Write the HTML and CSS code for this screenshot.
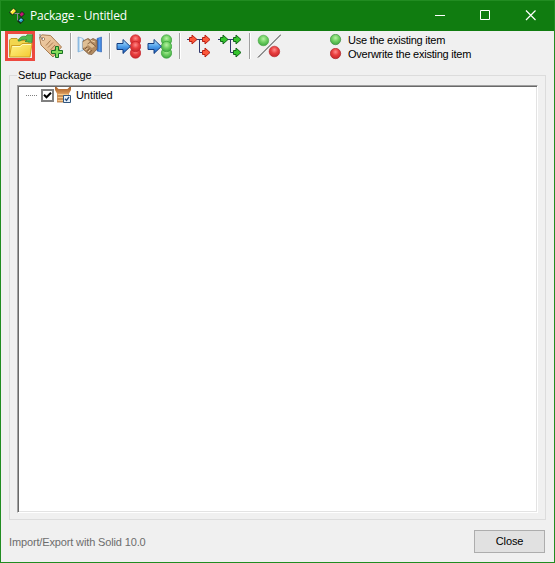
FILE: index.html
```
<!DOCTYPE html>
<html lang="en">
<head>
<meta charset="utf-8">
<title>Package - Untitled</title>
<link rel="stylesheet" href="styles.css">
</head>
<body>
<svg width="0" height="0" class="defs" aria-hidden="true">
  <defs>
    <radialGradient id="red" cx=".5" cy=".35" r=".65"><stop offset="0" stop-color="#ff8b8b"/><stop offset=".5" stop-color="#e83e3e"/><stop offset="1" stop-color="#c7262b"/></radialGradient>
    <radialGradient id="green" cx=".5" cy=".35" r=".65"><stop offset="0" stop-color="#b8f2a5"/><stop offset=".5" stop-color="#6fd062"/><stop offset="1" stop-color="#3fa642"/></radialGradient>
    <linearGradient id="blue" x2="0" y2="1"><stop stop-color="#c2ecff"/><stop offset=".5" stop-color="#4f9fea"/><stop offset="1" stop-color="#1659bd"/></linearGradient>
    <linearGradient id="folder" x2="1" y2="1"><stop stop-color="#fff58c"/><stop offset="1" stop-color="#f4c92f"/></linearGradient>
    <linearGradient id="tag" x2="1" y2="1"><stop stop-color="#f0cfaa"/><stop offset="1" stop-color="#dcae7d"/></linearGradient>
    <linearGradient id="sleeve"><stop stop-color="#2361bd"/><stop offset=".6" stop-color="#58a0f0"/><stop offset="1" stop-color="#2c6bc8"/></linearGradient>
    <linearGradient id="cuff"><stop stop-color="#7fb5e0"/><stop offset=".5" stop-color="#f4fbff"/><stop offset="1" stop-color="#a5cdec"/></linearGradient>
    <linearGradient id="box" x2="0" y2="1"><stop stop-color="#a55d27"/><stop offset="1" stop-color="#d89454"/></linearGradient>
    <path id="arrow" d="M2 -2H4.500V-4.500L9.500 0L4.500 4.500V2H2Z"/>
    <path id="bigarrow" d="M1 9.500H7V5.500L14.300 12.500L7 19.500V15.500H1Z"/>
  </defs>
</svg>
<div class="window">
  <header class="titlebar">
    <svg class="app-icon" width="16" height="16" viewBox="0 0 16 16">
      <path d="M5 5.500H11M8.500 5.500V12.500H11" fill="none" stroke="#8d8d8d"/>
      <path d="M0 4.500L4.500 0L8 3L3.500 7.500Z" fill="#222"/>
      <path d="M1 4L4.500 .5L7 3L3.500 6.500Z" fill="#ffec35"/><path d="M2 4L4.500 1.500" stroke="#fffbb0"/>
      <path d="M9.500 6.500L13 3L16 6L12.500 9.500Z" fill="#18251a"/><path d="M10.500 6.500L13 4L15 6L12.500 8.500Z" fill="#c0186f"/>
      <path d="M8 13L12 9L15.500 12L11.500 16Z" fill="#18251a"/><path d="M9.500 12.500L12 10L14.500 12L12 14.500Z" fill="#20a8c0"/><path d="M11 12.500L12.500 11" stroke="#b8ffff"/>
    </svg>
    <h1>Package - Untitled</h1>
    <div class="controls">
      <svg width="45" height="30" viewBox="0 0 45 30"><path d="M17 14.500H27" stroke="#fff"/></svg>
      <svg width="45" height="30" viewBox="0 0 45 30"><path d="M17.500 9.500H26.500V18.500H17.500Z" fill="none" stroke="#fff"/></svg>
      <svg width="45" height="30" viewBox="0 0 45 30"><path d="M18 9.500L27.500 19M27.500 9.500L18 19" stroke="#fff" stroke-width="1.2"/></svg>
    </div>
  </header>
  <div class="toolbar">
    <button class="tool selected"><svg width="25" height="25" viewBox="0 0 25 25">
      <path d="M1.500 22V6L3 4.500H9L11 6.500H21V11" fill="#f2d64e" stroke="#c59a25"/>
      <path d="M10 7C11.500 3 14.500 1.500 18 2.500L19 .8H24.500L24 8.500L17 7.500L19 5.700C16 5 13.500 5.500 12 7Z" fill="#4fbb4c" stroke="#268031" stroke-width=".7"/>
      <path d="M3.500 11.500H12L14 9.500H24L22 23H1.500Z" fill="url(#folder)" stroke="#d0a020"/>
      <path d="M4.500 12.500H12.500L14.500 10.500H23" fill="none" stroke="#fffbc0"/>
    </svg></button>
    <button class="tool"><svg width="25" height="25" viewBox="0 0 25 25">
      <path d="M1.500 3L4 .8L12.500 1.500L23.500 13L15 23L3 11Z" fill="url(#tag)" stroke="#a87d52"/>
      <path d="M8 11.500L12.500 6.500M10 13.500L15 8.500M12.500 16L17 11M14.500 18L19 13" stroke="#9e7147" stroke-width=".9"/>
      <circle cx="5.200" cy="5" r="1.500" fill="#fff" stroke="#9b6c42" stroke-width=".8"/><path d="M2 0C1.500 2 3 4.500 5 5" fill="none" stroke="#777"/>
      <path d="M17.500 12.500H20.500V16.500H24.500V19.500H20.500V23.500H17.500V19.500H13.500V16.500H17.500Z" fill="#83dc5b" stroke="#167324"/>
    </svg></button>
    <span class="sep"></span>
    <button class="tool"><svg width="25" height="25" viewBox="0 0 25 25">
      <path d="M1 3L5 4L6.500 5V16L1 18Z" fill="url(#cuff)" stroke="#7eb0d8" stroke-width=".7"/>
      <path d="M20 4.500L24.500 3V18L20 17Z" fill="url(#sleeve)" stroke="#2f65b6" stroke-width=".6"/>
      <path d="M6 7L11 4.500L13.500 6L16 4.500L20 6.500V15L15 20.500L11.500 20L6 15Z" fill="#b28c62" stroke="#7d5b3b" stroke-width=".8"/>
      <path d="M6 8L10.500 5.500L13 8L18 12L15 14L11 11L8.500 13L6 14Z" fill="#dfbf94"/>
      <path d="M10.500 10L13.500 8L19 12.500M8 15L10 13M10 17.500L12.500 14.500M12.500 19L15 16" fill="none" stroke="#735033" stroke-width=".8"/>
      <path d="M8.500 16L10.500 14M11 18L13 16M14 6.500L18 8" stroke="#f0d1a5"/>
    </svg></button>
    <span class="sep"></span>
    <button class="tool"><svg width="25" height="25" viewBox="0 0 25 25">
      <g fill="url(#red)" stroke="#c5242a" stroke-width=".7"><circle cx="19.500" cy="6" r="5.200"/><circle cx="19.500" cy="19" r="5.200"/><circle cx="19.500" cy="12.500" r="5.200"/></g>
      <use href="#bigarrow" fill="url(#blue)" stroke="#123d80"/>
    </svg></button>
    <button class="tool"><svg width="25" height="25" viewBox="0 0 25 25">
      <g fill="url(#green)" stroke="#38a43a" stroke-width=".7"><circle cx="19.500" cy="6" r="5.200"/><circle cx="19.500" cy="19" r="5.200"/><circle cx="19.500" cy="12.500" r="5.200"/></g>
      <use href="#bigarrow" fill="url(#blue)" stroke="#123d80"/>
    </svg></button>
    <span class="sep"></span>
    <button class="tool"><svg width="25" height="25" viewBox="0 0 25 25">
      <path d="M1 5.500H17M13.500 5.500V18.500H17" fill="none" stroke="#32386c"/>
      <g fill="#fc583a" stroke="#b81f12"><use href="#arrow" x="1.500" y="5.500"/><use href="#arrow" x="14.500" y="5.500"/><use href="#arrow" x="14.500" y="18.500"/></g>
    </svg></button>
    <button class="tool"><svg width="25" height="25" viewBox="0 0 25 25">
      <path d="M1 5.500H17M13.500 5.500V18.500H17" fill="none" stroke="#32386c"/>
      <g fill="#35c52d" stroke="#12651a"><use href="#arrow" x="1.500" y="5.500"/><use href="#arrow" x="14.500" y="5.500"/><use href="#arrow" x="14.500" y="18.500"/></g>
    </svg></button>
    <span class="sep"></span>
    <button class="tool"><svg width="25" height="25" viewBox="0 0 25 25">
      <path d="M2 23.500L25 .5" stroke="#333"/>
      <circle cx="7.400" cy="6.500" r="5.300" fill="url(#green)" stroke="#46a842" stroke-width=".6"/><circle cx="18.400" cy="17.500" r="5.300" fill="url(#red)" stroke="#b72226" stroke-width=".6"/>
    </svg></button>
    <div class="legend">
      <div><svg width="12" height="12"><circle cx="5.500" cy="5.500" r="5.200" fill="url(#green)" stroke="#46904a" stroke-width=".7"/></svg><span>Use the existing item</span></div>
      <div><svg width="12" height="12"><circle cx="5.500" cy="5.500" r="5.200" fill="url(#red)" stroke="#a92a2e" stroke-width=".7"/></svg><span>Overwrite the existing item</span></div>
    </div>
  </div>
  <fieldset class="group">
    <legend>Setup Package</legend>
    <div class="tree">
      <div class="node">
        <span class="dots"></span>
        <span class="check"><svg width="9" height="9" viewBox="0 0 9 9"><path d="M1 3.800L3.500 6.300L8 1.800" fill="none" stroke="#000" stroke-width="2"/></svg></span>
        <svg class="package" width="16" height="16" viewBox="0 0 16 16">
          <path d="M2 6H14V15H2Z" fill="#d9a066"/>
          <path d="M3 7.500H13M3 10.500H9M3 13.500H8" stroke="#f5c98d"/>
          <path d="M2 9H14M2 12H9M2 15H9" stroke="#b5783f" stroke-width=".8"/>
          <path d="M0 0H1.500L3.500 2H12.500L14.500 0H16V3L14 6.500H2L0 3Z" fill="url(#box)"/>
          <path d="M8.500 8.500H15.500V15.500H8.500Z" fill="#e8f1fb" stroke="#31567e"/><path d="M10 11.800L11.500 13.500L14 10" fill="none" stroke="#264c7d" stroke-width="1.300"/>
        </svg>
        <span class="name">Untitled</span>
      </div>
    </div>
  </fieldset>
  <footer><span class="version">Import/Export with Solid 10.0</span><button class="close">Close</button></footer>
</div>
</body>
</html>
```
FILE: styles.css
```
* { box-sizing: border-box; }
body { margin: 0; font: 11px/14px "Liberation Sans", Arial, sans-serif; color: #000; }
.defs { position: absolute; }
svg { display: block; flex: none; }
button { font: inherit; margin: 0; padding: 0; color: inherit; }
.window { width: 555px; height: 563px; border: 1px solid #218c21; background: #f0f0f0; display: flex; flex-direction: column; }
.titlebar { height: 30px; flex: none; background: #107c10; display: flex; align-items: center; padding: 0 1px 0 8px; color: #fff; }
.app-icon { margin-top: -1px; }
h1 { margin: 0 0 0 5px; font: 12px/18px "Open Sans", "Noto Sans", sans-serif; white-space: nowrap; letter-spacing: -.22px; }
.controls { display: flex; margin-left: auto; }
.toolbar { height: 31px; flex: none; display: flex; padding-left: 3px; }
.tool { width: 31px; height: 30px; border: 0; background: none; display: flex; align-items: center; justify-content: center; flex: none; }
.selected { width: 30px; margin-left: 1px; border: 3px solid #ed493f; }
.sep { width: 8px; height: 26px; margin-top: 2px; flex: none; background: linear-gradient(90deg, transparent 4px, #a0a0a0 4px, #a0a0a0 5px, #fff 5px, #fff 6px, transparent 6px); }
.legend { margin: 2px 0 0 46px; letter-spacing: -.24px; }
.legend div { display: flex; align-items: center; gap: 6px; height: 14px; white-space: nowrap; }
.group { margin: 7px 8px 0; padding: 0 7px 7px; height: 451px; border: 1px solid #dcdcdc; min-width: 0; display: flex; flex-direction: column; }
legend { padding: 0 2px 0 1px; line-height: 13px; letter-spacing: -.08px; }
.tree { height: 428px; margin-top: 3px; background: #fff; border: 1px solid; border-color: #a0a0a0 #fff #fff #a0a0a0; box-shadow: inset 1px 1px #696969, inset -1px -1px #e3e3e3; padding: 1px 0 0 7px; }
.node { display: flex; align-items: center; height: 16px; }
.dots { width: 12px; height: 1px; margin: 0 3px 0 1px; background: repeating-linear-gradient(90deg, #808080 0 1px, transparent 1px 2px); }
.check { width: 13px; height: 13px; border: 2px solid #808080; margin-right: 1px; }
.name { margin-left: 5px; letter-spacing: -.08px; }
footer { display: flex; justify-content: space-between; align-items: center; padding: 0 9px 0 8px; height: 44px; }
.version { color: #6d6d6d; letter-spacing: -.14px; margin-top: 1px; }
.close { width: 71px; height: 23px; border: 1px solid #adadad; background: #e1e1e1; letter-spacing: -.1px; }
```
